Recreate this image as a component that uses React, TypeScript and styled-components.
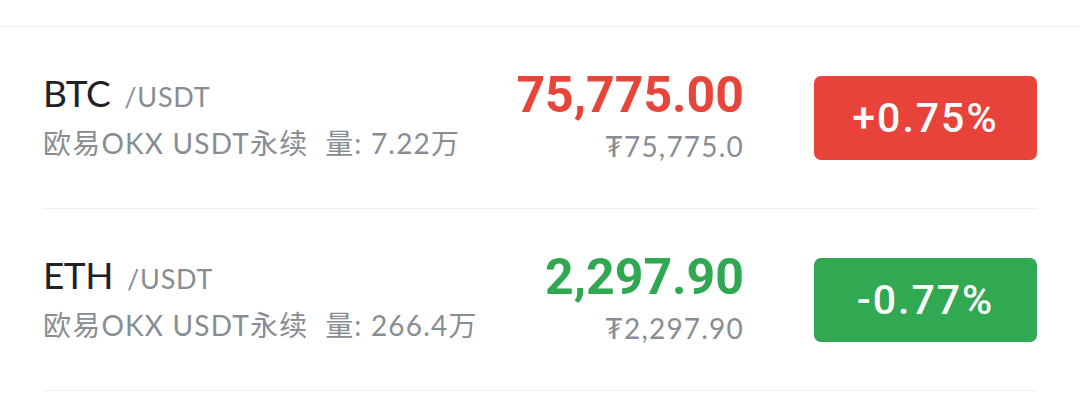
import React from "react";
import styled, { createGlobalStyle } from "styled-components";

const GlobalStyle = createGlobalStyle`
  html, body { margin: 0; padding: 0; background: #ffffff; }
  body { font-family: Lato, "Noto Sans CJK SC", sans-serif; }
`;

const Page = styled.div`
  width: 1080px;
  height: 407px;
  background: #fff;
  overflow: hidden;
`;

const TopBar = styled.div`
  height: 26px;
  border-bottom: 1px solid #f0f1f2;
`;

const List = styled.div`
  padding: 0 43px;
  display: flex;
  flex-direction: column;
`;

const Row = styled.div`
  height: 181px;
  border-bottom: 1px solid #eeeff0;
  display: grid;
  grid-template-columns: minmax(0, 1fr) auto 223px;
  align-items: center;
  column-gap: 73px;
`;

const Left = styled.div`
  display: flex;
  flex-direction: column;
  padding-top: 3px;
`;

const TitleLine = styled.div`
  display: flex;
  align-items: baseline;
  line-height: 44px;
`;

const Symbol = styled.span`
  font-family: Lato, sans-serif;
  font-size: 37px;
  color: #1f2124;
  letter-spacing: -0.5px;
`;

const Quote = styled.span`
  font-family: Lato, sans-serif;
  font-size: 27px;
  color: #878d93;
  margin-left: 14px;
  letter-spacing: 0.8px;
`;

const SubLine = styled.div`
  font-family: Lato, "Noto Sans CJK SC", sans-serif;
  font-size: 28px;
  line-height: 48px;
  color: #878d93;
  letter-spacing: 1.2px;
  white-space: pre;
`;

const Right = styled.div`
  display: flex;
  flex-direction: column;
  align-items: flex-end;
  padding-top: 3px;
`;

const Price = styled.div<{ $up: boolean }>`
  font-family: Roboto, sans-serif;
  font-weight: 700;
  font-size: 50px;
  line-height: 54px;
  margin-right: -3px;
  color: ${(p) => (p.$up ? "#e7443a" : "#30a852")};
`;

const Fiat = styled.div`
  font-family: Lato, "DejaVu Sans", sans-serif;
  font-size: 28px;
  line-height: 48px;
  letter-spacing: 1.2px;
  margin-right: -3px;
  color: #878d93;
`;

const Badge = styled.div<{ $up: boolean }>`
  height: 84px;
  border-radius: 7px;
  background: ${(p) => (p.$up ? "#e8433a" : "#31a852")};
  color: #fff;
  display: flex;
  align-items: center;
  justify-content: center;
  font-family: Roboto, sans-serif;
  font-weight: 500;
  font-size: 41px;
  letter-spacing: 2px;
`;

type Item = {
  sym: string;
  vol: string;
  price: string;
  fiat: string;
  change: string;
  up: boolean;
};

const items: Item[] = [
  { sym: "BTC", vol: "7.22万", price: "75,775.00", fiat: "₮75,775.0", change: "+0.75%", up: true },
  { sym: "ETH", vol: "266.4万", price: "2,297.90", fiat: "₮2,297.90", change: "-0.77%", up: false },
];

export default function App() {
  return (
    <Page>
      <GlobalStyle />
      <TopBar />
      <List>
        {items.map((it) => (
          <Row key={it.sym}>
            <Left>
              <TitleLine>
                <Symbol>{it.sym}</Symbol>
                <Quote>/USDT</Quote>
              </TitleLine>
              <SubLine>{`欧易OKX USDT永续  量: ${it.vol}`}</SubLine>
            </Left>
            <Right>
              <Price $up={it.up}>{it.price}</Price>
              <Fiat>{it.fiat}</Fiat>
            </Right>
            <Badge $up={it.up}>{it.change}</Badge>
          </Row>
        ))}
      </List>
    </Page>
  );
}
